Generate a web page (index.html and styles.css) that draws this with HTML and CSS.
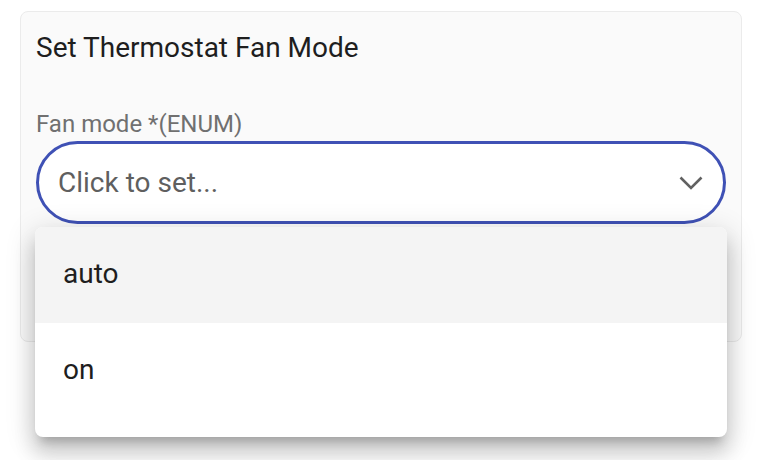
FILE: index.html
```html
<!DOCTYPE html>
<html>
<head>
<meta charset="utf-8">
<link rel="stylesheet" href="styles.css">
</head>
<body>
<div class="page">
  <div class="card">
    <div class="title">Set Thermostat Fan Mode</div>
    <div class="field">
      <div class="label">Fan mode *(ENUM)</div>
      <div class="select-wrap">
        <div class="select">
          <span class="placeholder">Click to set...</span>
          <svg class="chevron" width="24" height="14" viewBox="0 0 24 14"><polyline points="1.5,1.5 12,12 22.5,1.5" fill="none" stroke="#616161" stroke-width="2.6"/></svg>
        </div>
        <ul class="menu">
          <li class="item active">auto</li>
          <li class="item">on</li>
        </ul>
      </div>
    </div>
  </div>
</div>
</body>
</html>
```
FILE: styles.css
```css
html, body {
  margin: 0;
  padding: 0;
  background: #ffffff;
}
body {
  font-family: Roboto, "Liberation Sans", sans-serif;
  width: 768px;
  height: 460px;
  overflow: hidden;
}
.page {
  padding: 11px 0 0 20px;
}
.card {
  box-sizing: border-box;
  width: 722px;
  height: 331px;
  background: #fafafa;
  border: 1px solid #ebebeb;
  border-radius: 8px;
  padding: 20px 15px 0 15px;
}
.title {
  font-size: 28px;
  line-height: 32px;
  color: #1e1e1e;
}
.field {
  margin-top: 46px;
}
.label {
  font-size: 24px;
  line-height: 28px;
  color: #707070;
  margin-bottom: 3px;
}
.select-wrap {
  position: relative;
}
.select {
  box-sizing: border-box;
  height: 83px;
  border: 3px solid #3f51b5;
  border-radius: 42px;
  background: #ffffff;
  display: flex;
  align-items: center;
  justify-content: space-between;
  padding: 0 20px 0 19px;
}
.placeholder {
  font-size: 28px;
  line-height: 32px;
  color: #5f5f5f;
}
.chevron {
  display: block;
}
.menu {
  position: absolute;
  top: calc(100% + 3px);
  left: -1px;
  right: -1px;
  margin: 0;
  padding: 0 0 18px 0;
  list-style: none;
  background: #ffffff;
  border-radius: 8px;
  overflow: hidden;
  box-shadow: 0 10px 10px -6px rgba(0,0,0,0.2), 0 16px 20px 2px rgba(0,0,0,0.14), 0 6px 28px 4px rgba(0,0,0,0.12);
}
.item {
  box-sizing: border-box;
  height: 96px;
  display: flex;
  align-items: center;
  padding: 0 0 4px 28px;
  font-size: 28px;
  color: #1e1e1e;
}
.item.active {
  background: #f4f4f4;
}
```
